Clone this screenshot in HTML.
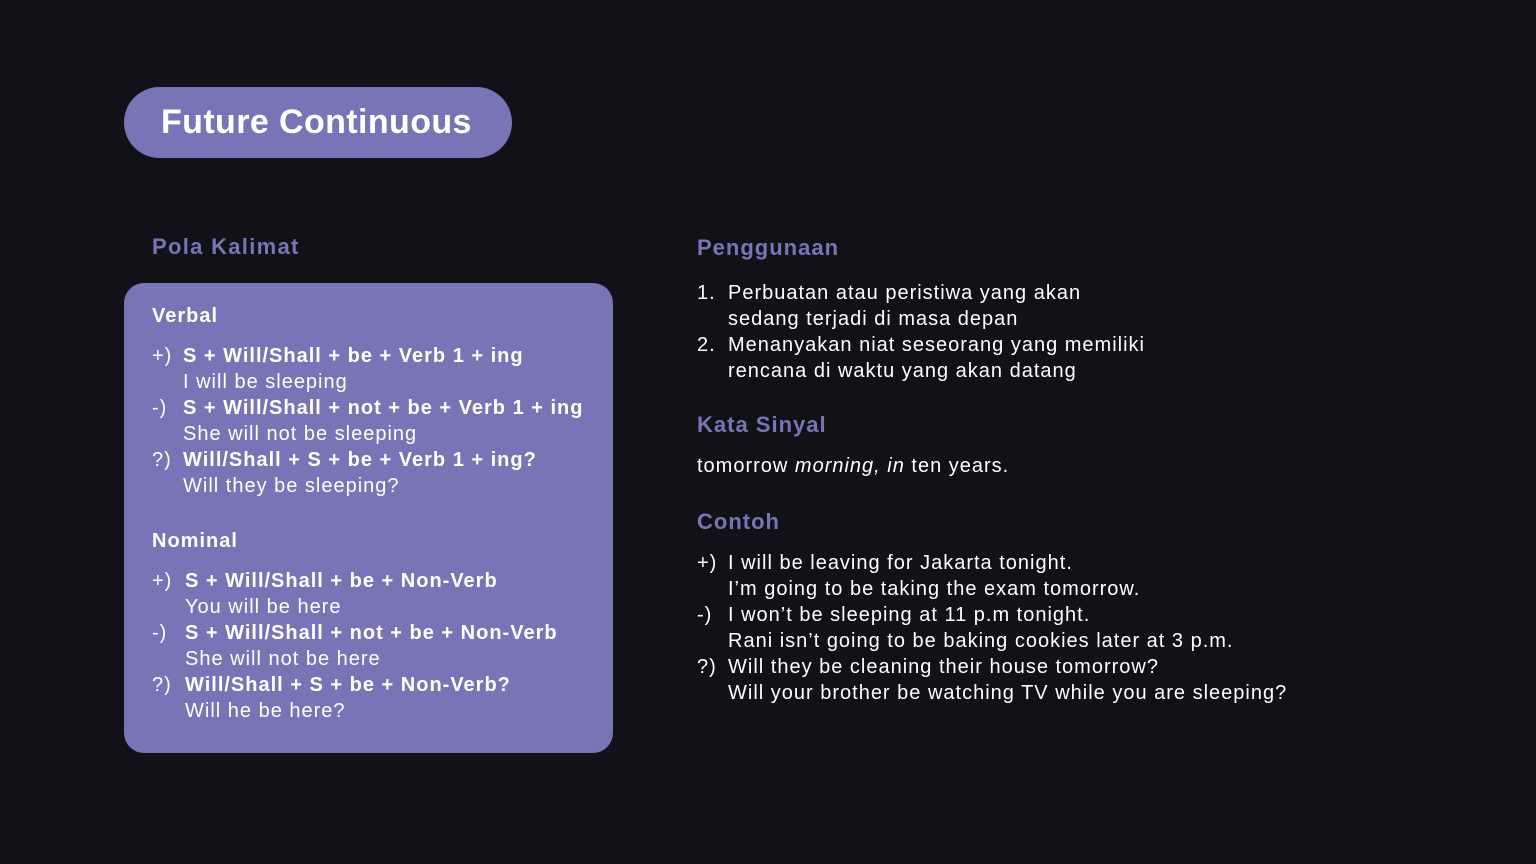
<!DOCTYPE html>
<html><head><meta charset="utf-8"><style>
*{margin:0;padding:0;box-sizing:border-box}
body{width:1536px;height:864px;background:#121117;font-family:"Liberation Sans",sans-serif;color:#fff;position:relative;overflow:hidden}
.a{position:absolute;white-space:nowrap}
.pill{left:124px;top:87px;width:388px;height:71px;border-radius:36px;background:#7875b6}
.title{left:161px;top:101px;font-size:34px;font-weight:bold;line-height:42px;letter-spacing:0.4px}
.h{font-size:22px;font-weight:bold;color:#7875b6;line-height:26px;letter-spacing:1px}
.card{left:124px;top:283px;width:489px;height:470px;border-radius:20px;background:#7875b6}
.l{font-size:20px;line-height:26px;letter-spacing:1px}
.b{font-weight:bold}
.p{position:absolute;left:0}
.blk{position:absolute}
.blk div{padding-left:31px;position:relative}
</style></head><body>
<div class="a pill"></div>
<div class="a title">Future Continuous</div>
<div class="a h" style="left:152px;top:234px;letter-spacing:1.3px">Pola Kalimat</div>
<div class="a card"></div>
<div class="a l b" style="left:152px;top:303px">Verbal</div>
<div class="blk l" style="left:152px;top:343px;white-space:nowrap">
<div><span class="p">+)</span><b>S + Will/Shall + be + Verb 1 + ing</b></div>
<div>I will be sleeping</div>
<div><span class="p">-)</span><b>S + Will/Shall + not + be + Verb 1 + ing</b></div>
<div>She will not be sleeping</div>
<div><span class="p">?)</span><b>Will/Shall + S + be + Verb 1 + ing?</b></div>
<div>Will they be sleeping?</div>
</div>
<div class="a l b" style="left:152px;top:528px">Nominal</div>
<div class="blk l" style="left:152px;top:568px;white-space:nowrap">
<div style="padding-left:33px"><span class="p">+)</span><b>S + Will/Shall + be + Non-Verb</b></div>
<div style="padding-left:33px">You will be here</div>
<div style="padding-left:33px"><span class="p">-)</span><b>S + Will/Shall + not + be + Non-Verb</b></div>
<div style="padding-left:33px">She will not be here</div>
<div style="padding-left:33px"><span class="p">?)</span><b>Will/Shall + S + be + Non-Verb?</b></div>
<div style="padding-left:33px">Will he be here?</div>
</div>
<div class="a h" style="left:697px;top:235px">Penggunaan</div>
<div class="blk l" style="left:697px;top:280px;white-space:nowrap">
<div><span class="p">1.</span>Perbuatan atau peristiwa yang akan</div>
<div>sedang terjadi di masa depan</div>
<div><span class="p">2.</span>Menanyakan niat seseorang yang memiliki</div>
<div>rencana di waktu yang akan datang</div>
</div>
<div class="a h" style="left:697px;top:412px">Kata Sinyal</div>
<div class="a l" style="left:697px;top:453px">tomorrow <i>morning, in</i> ten years.</div>
<div class="a h" style="left:697px;top:509px">Contoh</div>
<div class="blk l" style="left:697px;top:550px;white-space:nowrap">
<div><span class="p">+)</span>I will be leaving for Jakarta tonight.</div>
<div>I’m going to be taking the exam tomorrow.</div>
<div><span class="p">-)</span>I won’t be sleeping at 11 p.m tonight.</div>
<div>Rani isn’t going to be baking cookies later at 3 p.m.</div>
<div><span class="p">?)</span>Will they be cleaning their house tomorrow?</div>
<div>Will your brother be watching TV while you are sleeping?</div>
</div>
</body></html>
